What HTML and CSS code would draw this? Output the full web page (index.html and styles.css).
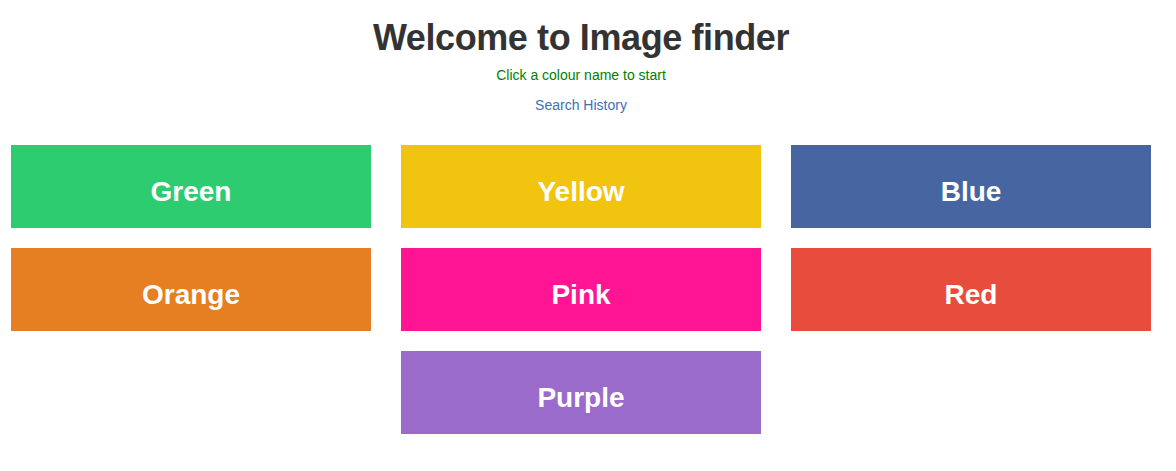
FILE: index.html
```html
<!DOCTYPE html>
<html lang="en">
<head>
<meta charset="utf-8">
<title>Image finder</title>
<link rel="stylesheet" href="styles.css">
</head>
<body>
<div class="page">
  <header class="intro">
    <h1 class="title">Welcome to Image finder</h1>
    <p class="subtitle">Click a colour name to start</p>
    <a class="history" href="#">Search History</a>
  </header>
  <main class="grid">
    <a class="tile green" href="#">Green</a>
    <a class="tile yellow" href="#">Yellow</a>
    <a class="tile blue" href="#">Blue</a>
    <a class="tile orange" href="#">Orange</a>
    <a class="tile pink" href="#">Pink</a>
    <a class="tile red" href="#">Red</a>
    <a class="tile purple slot-mid" href="#">Purple</a>
  </main>
</div>
</body>
</html>
```
FILE: styles.css
```css
html, body {
  margin: 0;
  padding: 0;
  background: #fff;
}
body {
  font-family: "Liberation Sans", Arial, Helvetica, sans-serif;
  color: #333;
}
.page {
  width: 1162px;
}
.intro {
  display: flex;
  flex-direction: column;
  align-items: center;
  padding-top: 18px;
}
.title {
  margin: 0;
  font-size: 36px;
  line-height: 40px;
  font-weight: bold;
  letter-spacing: -0.4px;
  color: #333;
}
.subtitle {
  margin: 7px 0 0;
  font-size: 14px;
  line-height: 20px;
  color: #008000;
}
.history {
  margin-top: 10px;
  font-size: 14px;
  line-height: 20px;
  color: #3d6fb6;
  text-decoration: none;
}
.grid {
  display: grid;
  grid-template-columns: repeat(3, 360px);
  column-gap: 30px;
  row-gap: 20px;
  justify-content: center;
  margin-top: 30px;
}
.tile {
  display: block;
  box-sizing: border-box;
  height: 83px;
  padding-top: 31px;
  text-align: center;
  font-size: 28px;
  line-height: 31px;
  font-weight: bold;
  color: #fff;
  text-decoration: none;
}
.slot-mid { grid-column: 2; }
.green { background: #2ecc71; }
.yellow { background: #f1c40f; }
.blue { background: #4766a1; }
.orange { background: #e67e22; }
.pink { background: #ff1493; }
.red { background: #e74c3c; }
.purple { background: #9a6bcb; }
```
